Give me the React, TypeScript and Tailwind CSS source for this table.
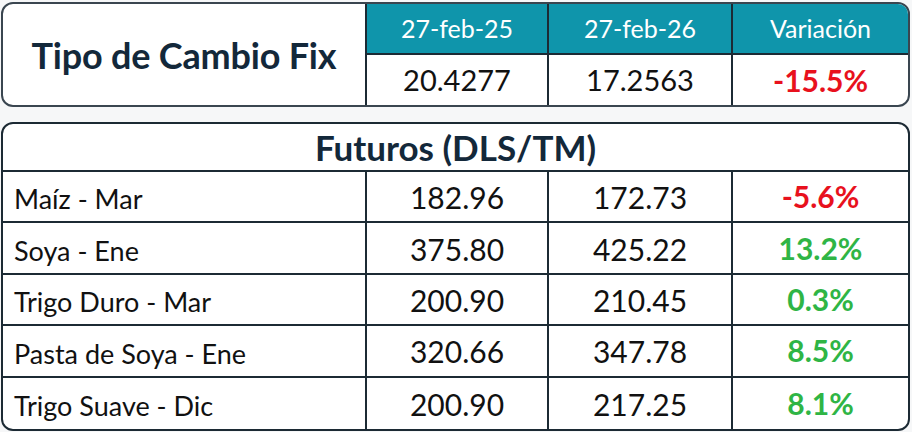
import React from 'react';

const rows = [
  { name: 'Maíz - Mar', a: '182.96', b: '172.73', v: '-5.6%', up: false },
  { name: 'Soya - Ene', a: '375.80', b: '425.22', v: '13.2%', up: true },
  { name: 'Trigo Duro - Mar', a: '200.90', b: '210.45', v: '0.3%', up: true },
  { name: 'Pasta de Soya - Ene', a: '320.66', b: '347.78', v: '8.5%', up: true },
  { name: 'Trigo Suave - Dic', a: '200.90', b: '217.25', v: '8.1%', up: true },
];

export default function App() {
  return (
    <div
      className="w-[912px] h-[432px] bg-[#f6f7f8] pt-[2px] pb-[1px] pl-[1px] pr-[2px] flex flex-col gap-[15px] overflow-hidden"
      style={{ fontFamily: 'Lato, "Open Sans", sans-serif' }}
    >
      {/* tipo de cambio */}
      <div className="flex h-[105px] shrink-0 bg-white border-2 border-[#3a4650] rounded-[12px] overflow-hidden">
        <div className="w-[364px] flex items-center justify-center border-r-2 border-[#1c2a34]">
          <span className="text-[36px] font-bold text-[#13283a] tracking-[-0.2px]">Tipo de Cambio Fix</span>
        </div>
        <div className="flex-1 grid grid-cols-[182px_184px_1fr] grid-rows-[51px_1fr]">
          <div className="bg-[#0f95ab] text-white text-[25px] flex items-center justify-center border-r-2 border-b-2 border-[#1c2a34]">27-feb-25</div>
          <div className="bg-[#0f95ab] text-white text-[25px] flex items-center justify-center border-r-2 border-b-2 border-[#1c2a34]">27-feb-26</div>
          <div className="bg-[#0f95ab] text-white text-[25px] flex items-center justify-center border-b-2 border-[#1c2a34]">Variación</div>
          <div className="text-[29px] text-[#111] flex items-center justify-center border-r-2 border-[#1c2a34]">20.4277</div>
          <div className="text-[29px] text-[#111] flex items-center justify-center border-r-2 border-[#1c2a34]">17.2563</div>
          <div className="text-[30px] font-bold text-[#e8111d] flex items-center justify-center">-15.5%</div>
        </div>
      </div>

      {/* futuros */}
      <div className="flex-1 bg-white border-2 border-[#1c2a34] rounded-[12px] overflow-hidden flex flex-col">
        <div className="h-[48px] flex items-center justify-center border-b-2 border-[#1c2a34]">
          <span className="text-[35px] font-bold text-[#13283a]">Futuros (DLS/TM)</span>
        </div>
        <div className="flex-1 grid grid-cols-[364px_182px_184px_1fr] grid-rows-5">
          {rows.map((r, i) => {
            const bb = i < rows.length - 1 ? 'border-b-2' : '';
            return (
              <React.Fragment key={r.name}>
                <div className={`pl-[11px] pt-[6px] flex items-center text-[27px] text-[#111] border-r-2 border-[#1c2a34] ${bb}`}>{r.name}</div>
                <div className={`pt-[2px] flex items-center justify-center text-[30px] text-[#111] border-r-2 border-[#1c2a34] ${bb}`}>{r.a}</div>
                <div className={`pt-[2px] flex items-center justify-center text-[30px] text-[#111] border-r-2 border-[#1c2a34] ${bb}`}>{r.b}</div>
                <div className={`flex items-center justify-center text-[30px] font-bold border-[#1c2a34] ${bb} ${r.up ? 'text-[#2fb545]' : 'text-[#e8111d]'}`}>{r.v}</div>
              </React.Fragment>
            );
          })}
        </div>
      </div>
    </div>
  );
}
